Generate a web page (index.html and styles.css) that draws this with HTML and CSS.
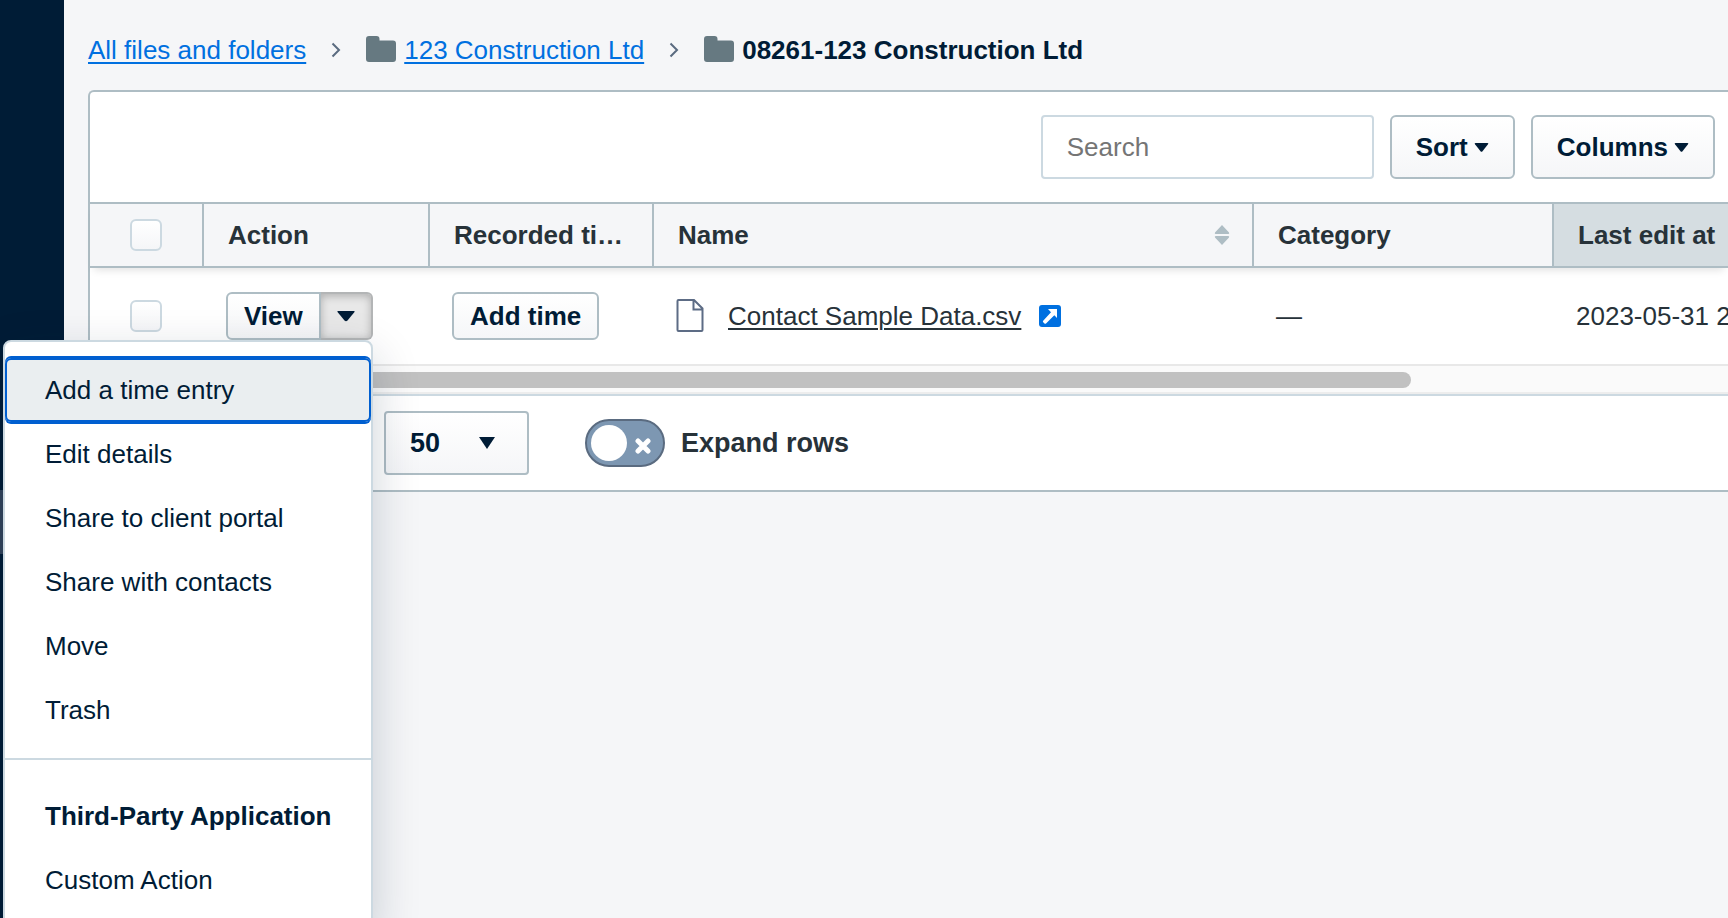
FILE: index.html
```html
<!DOCTYPE html>
<html lang="en">
<head>
    <meta charset="UTF-8">
    <meta name="viewport" content="width=device-width, initial-scale=1.0">
    <title>Files</title>
    <link rel="stylesheet" href="styles.css">
</head>
<body>
    <div class="sidebar">
        <div class="sidebar-active"></div>
    </div>

    <main class="main">
        <nav class="breadcrumb">
            <a href="#">All files and folders</a>
            <svg class="chevron" width="10" height="16" viewBox="0 0 10 16"><path d="M1.500 1.500 8 8l-6.500 6.500" fill="none" stroke="#5a6b80" stroke-width="2"/></svg>
            <span class="crumb">
                <svg width="30" height="26" viewBox="0 0 30 26"><path d="M3 0h7.500a3 3 0 0 1 3 3v1.500H27a3 3 0 0 1 3 3V23a3 3 0 0 1-3 3H3a3 3 0 0 1-3-3V3a3 3 0 0 1 3-3z" fill="#667981"/></svg>
                <a href="#">123 Construction Ltd</a>
            </span>
            <svg class="chevron" width="10" height="16" viewBox="0 0 10 16"><path d="M1.500 1.500 8 8l-6.500 6.500" fill="none" stroke="#5a6b80" stroke-width="2"/></svg>
            <span class="crumb">
                <svg width="30" height="26" viewBox="0 0 30 26"><path d="M3 0h7.500a3 3 0 0 1 3 3v1.500H27a3 3 0 0 1 3 3V23a3 3 0 0 1-3 3H3a3 3 0 0 1-3-3V3a3 3 0 0 1 3-3z" fill="#667981"/></svg>
                <strong>08261-123 Construction Ltd</strong>
            </span>
        </nav>

        <section class="card">
            <div class="toolbar">
                <input class="search" type="text" placeholder="Search" aria-label="Search">
                <button class="btn">Sort <svg width="15" height="9" viewBox="0 0 15 9"><path d="M1.500 0h12q1.500 0 .5 1.300L8.500 8.300q-1 1-2 0L1 1.300Q0 0 1.500 0z" fill="#001c36"/></svg></button>
                <button class="btn">Columns <svg width="15" height="9" viewBox="0 0 15 9"><path d="M1.500 0h12q1.500 0 .5 1.300L8.500 8.300q-1 1-2 0L1 1.300Q0 0 1.500 0z" fill="#001c36"/></svg></button>
            </div>

            <table class="table">
                <colgroup>
                    <col class="col-check">
                    <col class="col-action">
                    <col class="col-time">
                    <col class="col-name">
                    <col class="col-category">
                    <col>
                </colgroup>
                <thead>
                    <tr>
                        <th class="check"><input class="checkbox" type="checkbox" aria-label="Select all"></th>
                        <th>Action</th>
                        <th>Recorded time</th>
                        <th>
                            <div class="th-sort">
                                Name
                                <svg width="16" height="20" viewBox="0 0 16 20"><path d="M8 0l7 7.500q.8 1.500-.8 1.500H1.800Q.2 9 1 7.500zM8 20l7-7.500q.8-1.500-.8-1.500H1.800Q.2 11 1 12.500z" fill="#aebdc4"/></svg>
                            </div>
                        </th>
                        <th>Category</th>
                        <th class="sorted">Last edit at</th>
                    </tr>
                </thead>
                <tbody>
                    <tr>
                        <td class="check"><input class="checkbox" type="checkbox" aria-label="Select file"></td>
                        <td>
                            <div class="split">
                                <button class="btn-small split-main">View</button>
                                <button class="btn-small split-toggle" aria-label="More actions"><svg width="18" height="11" viewBox="0 0 18 11"><path d="M1 0h16q1 0 .5 1L10.500 9.500q-1.500 1.500-3 0L.5 1Q0 0 1 0z" fill="#001c36"/></svg></button>
                                <div class="menu">
                                    <button class="menu-item focused">Add a time entry</button>
                                    <button class="menu-item">Edit details</button>
                                    <button class="menu-item">Share to client portal</button>
                                    <button class="menu-item">Share with contacts</button>
                                    <button class="menu-item">Move</button>
                                    <button class="menu-item">Trash</button>
                                    <div class="menu-divider"></div>
                                    <div class="menu-heading">Third-Party Application</div>
                                    <button class="menu-item">Custom Action</button>
                                </div>
                            </div>
                        </td>
                        <td><button class="btn-small">Add time</button></td>
                        <td>
                            <div class="file">
                                <svg width="28" height="34" viewBox="0 0 28 34"><path d="M2.500 1h15.500l8.500 8.500v21.500q0 1-1 1h-23q-1 0-1-1v-29q0-1 1-1zM17.500 1v9.500h9" fill="none" stroke="#5d6c85" stroke-width="2"/></svg>
                                <a class="file-link" href="#">Contact Sample Data.csv</a>
                                <svg class="external" width="22" height="22" viewBox="0 0 22 22"><rect width="22" height="22" rx="3" fill="#0070e0"/><path d="M9 4h9v9l-2.700-2.700L7 18.500q-.8.700-1.500 0l-1.300-1.300q-.7-.7 0-1.500l7.800-8.400z" fill="#fff"/></svg>
                            </div>
                        </td>
                        <td>—</td>
                        <td>2023-05-31 2</td>
                    </tr>
                </tbody>
            </table>

            <div class="scrollbar">
                <div class="scrollbar-thumb"></div>
            </div>

            <div class="footer">
                <div class="page-size">
                    <select aria-label="Rows per page">
                        <option>50</option>
                    </select>
                    <svg width="16" height="12" viewBox="0 0 16 12"><path d="M0 0h16L8 12z" fill="#001c36"/></svg>
                </div>
                <label class="toggle-label">
                    <span class="toggle">
                        <input type="checkbox">
                        <svg width="16" height="16" viewBox="0 0 16 16"><path d="M3 3l10 10M13 3 3 13" stroke="#fff" stroke-width="5" stroke-linecap="round"/></svg>
                    </span>
                    Expand rows
                </label>
            </div>
        </section>
    </main>
</body>
</html>
```

FILE: styles.css
```css
* {
    margin: 0;
    padding: 0;
    box-sizing: border-box;
}

body {
    display: flex;
    min-height: 100vh;
    overflow: hidden;
    background: #f5f6f8;
    color: #001c36;
    font-family: "Liberation Sans", Arial, sans-serif;
    font-size: 26px;
    line-height: 32px;
}

button,
input,
select {
    font: inherit;
    color: inherit;
}

svg {
    display: block;
    flex: none;
}

.sidebar {
    flex: none;
    width: 64px;
    padding-top: 490px;
    background: #001c36;
}

.sidebar-active {
    height: 64px;
    background: #33445a;
}

.main {
    flex: 1;
    min-width: 0;
    padding-left: 24px;
}

/* Breadcrumb */
.breadcrumb {
    display: flex;
    align-items: center;
    gap: 25px;
    padding: 34px 0 24px;
}

.breadcrumb a {
    color: #0070e0;
    text-decoration-thickness: 2px;
    text-underline-offset: 3px;
}

.crumb {
    display: flex;
    align-items: center;
    gap: 8px;
}

.crumb svg {
    margin-bottom: 3px;
}

/* Card */
.card {
    background: #fff;
    border: 2px solid #aebdc4;
    border-right: none;
    border-top-left-radius: 6px;
}

.toolbar {
    display: flex;
    justify-content: flex-end;
    gap: 16px;
    padding: 23px 13px 23px 24px;
}

.search {
    width: 333px;
    height: 64px;
    padding: 0 24px;
    border: 2px solid #ccd9e1;
    border-radius: 4px;
    background: #fff;
}

.search::placeholder {
    color: #757575;
}

.btn,
.btn-small {
    display: flex;
    align-items: center;
    gap: 6px;
    height: 64px;
    padding: 0 24px;
    border: 2px solid #aebdc4;
    border-radius: 6px;
    background: linear-gradient(#fff, #f5f6f8);
    color: #001c36;
    font-weight: bold;
}

.btn-small {
    height: 48px;
    padding: 0 16px;
}

/* Table */
.table {
    width: 100%;
    table-layout: fixed;
    border-collapse: separate;
    border-spacing: 0;
    color: #273239;
}

.col-check {
    width: 114px;
}

.col-action {
    width: 226px;
}

.col-time {
    width: 224px;
}

.col-name {
    width: 600px;
}

.col-category {
    width: 300px;
}

.table thead {
    box-shadow: 0 6px 8px -4px rgba(0, 0, 0, 0.12);
}

.table th {
    height: 66px;
    padding: 0 22px 0 24px;
    border: solid #aebdc4;
    border-width: 2px 2px 2px 0;
    background: #f5f6f8;
    text-align: left;
    white-space: nowrap;
    overflow: hidden;
    text-overflow: ellipsis;
}

.table th.sorted {
    border-right: none;
    padding-right: 0;
    background: #d5dde1;
}

.table td {
    height: 96px;
    padding: 0 22px;
    white-space: nowrap;
}

.table .check {
    padding: 0 0 0 40px;
}

.checkbox {
    display: block;
    appearance: none;
    width: 32px;
    height: 32px;
    border: 2px solid #ccd9e1;
    border-radius: 6px;
    background: linear-gradient(#fff, #f5f6f8);
}

.th-sort {
    display: flex;
    align-items: center;
    justify-content: space-between;
}

.file {
    display: flex;
    align-items: center;
}

.file-link {
    margin: 0 18px 0 24px;
    color: inherit;
    text-decoration-thickness: 2px;
    text-underline-offset: 3px;
}

/* View button with its menu */
.split {
    position: relative;
    display: flex;
    width: 147px;
}

.split-main {
    flex: 1;
    border-radius: 6px 0 0 6px;
}

.split-toggle {
    justify-content: center;
    width: 52px;
    padding: 0;
    border-color: #b3b5b6;
    border-left: none;
    border-radius: 0 6px 6px 0;
    background: #e8e8e8;
    box-shadow: inset 0 2px 8px rgba(0, 0, 0, 0.25);
}

.menu {
    position: absolute;
    z-index: 10;
    top: 100%;
    right: 0;
    width: 370px;
    padding: 16px 0;
    border: 2px solid #ccd9e1;
    border-radius: 8px;
    background: #fff;
    box-shadow: 0 16px 48px rgba(0, 28, 54, 0.2);
    color: #001c36;
}

.menu-item,
.menu-heading {
    display: block;
    width: 100%;
    padding: 16px 40px;
    border: none;
    background: none;
    text-align: left;
}

.menu-item.focused {
    border-radius: 6px;
    background: #eaeef0;
    box-shadow: inset 0 0 0 2px #005fd0, 0 -2px 0 #005fd0, 0 2px 0 #005fd0;
}

.menu-divider {
    height: 2px;
    margin: 16px 0 24px;
    background: #ccd9e1;
}

.menu-heading {
    font-weight: bold;
}

/* Horizontal scrollbar */
.scrollbar {
    padding: 6px 8px 4px 4px;
    border-top: 2px solid #e8e8e8;
    border-bottom: 2px solid #ededed;
    background: #fafafa;
}

.scrollbar-thumb {
    width: 81%;
    height: 16px;
    border-radius: 8px;
    background: #c1c1c1;
}

/* Footer */
.footer {
    display: flex;
    align-items: center;
    gap: 56px;
    padding: 15px 24px 15px 294px;
    border-top: 2px solid #ccd9e1;
}

.page-size {
    position: relative;
}

.page-size select {
    display: block;
    appearance: none;
    width: 145px;
    height: 64px;
    padding: 0 24px;
    border: 2px solid #aebdc4;
    border-radius: 4px;
    background: linear-gradient(#fff, #f5f6f8);
    font-size: 27px;
    font-weight: bold;
}

.page-size svg {
    position: absolute;
    top: 26px;
    right: 34px;
    pointer-events: none;
}

.toggle-label {
    display: flex;
    align-items: center;
    gap: 16px;
    color: #273239;
    font-size: 27px;
    font-weight: bold;
}

.toggle {
    position: relative;
}

.toggle input {
    display: block;
    appearance: none;
    width: 80px;
    height: 48px;
    padding: 4px;
    border: 2px solid #5a6b80;
    border-radius: 24px;
    background: #7d97b2;
}

.toggle input::before {
    content: "";
    display: block;
    width: 36px;
    height: 36px;
    border-radius: 50%;
    background: #fff;
}

.toggle svg {
    position: absolute;
    top: 19px;
    right: 14px;
}
```
